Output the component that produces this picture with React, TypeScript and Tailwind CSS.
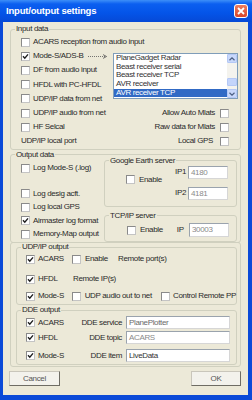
import React, {FC} from "react";
import clsx from "clsx";

const Box: FC<{on?: boolean}> = ({on}) => (
  <span className="inline-flex size-[9px] shrink-0 items-center justify-center border border-[#8a8a8a] border-b-[#c4c4c4] border-r-[#c4c4c4] bg-white">
    {on && (
      <svg width="7" height="7" viewBox="0 0 7 7">
        <path d="M1 3.3 L2.8 5.2 L6 1.4" fill="none" stroke="#1e1e1e" strokeWidth="1.4" />
      </svg>
    )}
  </span>
);

const Chk: FC<{on?: boolean; label: string; className?: string}> = ({on, label, className}) => (
  <div className={clsx("flex items-center gap-[3px]", className)}>
    <Box on={on} />
    <span className="whitespace-nowrap">{label}</span>
  </div>
);

const Field: FC<{value: string; className?: string; muted?: string}> = ({value, className, muted}) => (
  <div className={clsx("h-[13px] border border-[#9aa3ad] border-b-[#d6d6d6] border-r-[#d6d6d6] bg-white pl-[2px] leading-[11px] whitespace-nowrap overflow-hidden", muted ?? "text-[#333]", className)}>
    {value}
  </div>
);

const Group: FC<{title?: string; className?: string; children: React.ReactNode}> = ({title, className, children}) => (
  <fieldset className={clsx("border border-[#d0d0bf] rounded-[3px] min-w-0", className)}>
    {title && <legend className="ml-[4px] px-[1px] leading-[10px] whitespace-nowrap">{title}</legend>}
    {children}
  </fieldset>
);

const ScrollBtn: FC<{down?: boolean}> = ({down}) => (
  <div className="h-[9px] rounded-[1px] border border-[#b4c8f6] bg-[#c8d8fb] flex items-center justify-center">
    <svg width="6" height="4" viewBox="0 0 6 4">
      <path d={down ? "M0.5 0.8 L3 3.2 L5.5 0.8" : "M0.5 3.2 L3 0.8 L5.5 3.2"} fill="none" stroke="#4d6185" strokeWidth="1.2" />
    </svg>
  </div>
);

const Listbox = () => {
  const items = [
    "PlaneGadget Radar",
    "Beast receiver serial",
    "Beast receiver TCP",
    "AVR receiver",
    "AVR receiver TCP",
    "Aurora ADS-B Serial",
  ];
  return (
    <div className="flex w-[125px] h-[46px] border border-[#7f9db9] bg-white mt-[4px] mr-[-9px] ml-auto">
      <div className="flex-1 overflow-hidden">
        {items.map((it, i) => (
          <div
            key={it}
            className={clsx(
              "h-[8.6px] leading-[8.6px] pl-[2px] whitespace-nowrap",
              i === 4 ? "bg-[#316ac5] text-white" : "text-[#333]"
            )}
          >
            {it}
          </div>
        ))}
      </div>
      <div className="w-[10px] flex flex-col bg-[#f4f3ee]">
        <ScrollBtn />
        <div className="flex-1 flex flex-col justify-end pb-[3px]">
          <div className="h-[8px] rounded-[1px] border border-[#b4c8f6] bg-[#c4d5fb]" />
        </div>
        <ScrollBtn down />
      </div>
    </div>
  );
};

const Arrow = () => (
  <svg width="20" height="5" viewBox="0 0 20 5" className="ml-[5px]">
    <line x1="0" y1="2.5" x2="17" y2="2.5" stroke="#555" strokeWidth="0.8" strokeDasharray="1 1" />
    <path d="M15 0.6 L18.6 2.5 L15 4.4" fill="none" stroke="#555" strokeWidth="0.8" />
  </svg>
);

const App = () => {
  const row = "h-[14.2px] flex items-center";
  return (
    <div className="w-[252px] h-[400px] bg-[#0b4ad8] flex flex-col font-['Liberation_Sans',Arial,sans-serif] text-[8px] tracking-[-0.35px] text-[#2a2a2a]">
      <div className="h-[22px] shrink-0 flex items-center pl-[6px] pr-[4px] bg-[linear-gradient(to_bottom,#3d8ff8_0%,#0b5ff0_18%,#0454e8_60%,#0649d6_100%)]">
        <span className="flex-1 text-white font-bold text-[9.5px] tracking-[-0.2px]">Input/output settings</span>
        <div className="size-[14px] rounded-[3px] border border-white bg-[linear-gradient(to_bottom,#ee7d5e,#d9442a)] flex items-center justify-center">
          <svg width="8" height="8" viewBox="0 0 8 8">
            <path d="M1 1 L7 7 M7 1 L1 7" stroke="white" strokeWidth="1.8" />
          </svg>
        </div>
      </div>

      <div className="flex-1 ml-[3px] mr-[4px] mb-[5px] bg-[#ece9d8] flex flex-col">
        <Group title="Input data" className="mx-[7px] mt-[2px]">
          <div className="pl-[10px] pr-[11px] pt-[1px]">
            <div className={row}><Chk label="ACARS reception from audio input" /></div>
            <div className="flex">
              <div className="flex flex-col">
                <div className={row}><Chk on label="Mode-S/ADS-B" /><Arrow /></div>
                <div className={row}><Chk label="DF from audio input" /></div>
                <div className={row}><Chk label="HFDL with PC-HFDL" /></div>
                <div className={row}><Chk label="UDP/IP data from net" /></div>
              </div>
              <Listbox />
            </div>
            <div className={clsx(row, "justify-between")}>
              <Chk label="UDP/IP audio from net" />
              <div className="flex items-center gap-[5px]"><span>Allow Auto Mlats</span><Box /></div>
            </div>
            <div className={clsx(row, "justify-between")}>
              <Chk label="HF Selcal" />
              <div className="flex items-center gap-[5px]"><span>Raw data for Mlats</span><Box /></div>
            </div>
            <div className={clsx(row, "justify-between")}>
              <span>UDP/IP local port</span>
              <div className="flex items-center gap-[7px]"><span>Local GPS</span><Box /></div>
            </div>
          </div>
        </Group>

        <Group title="Output data" className="mx-[7px]">
          <div className="flex">
            <div className="w-[93px] shrink-0 pl-[10px] pt-[1.5px] flex flex-col">
              <div className="h-[14px] flex items-center"><Chk label="Log Mode-S (.log)" /></div>
              <div className="h-[13.5px] mt-[12px] flex items-center"><Chk label="Log desig acft." /></div>
              <div className="h-[13.5px] flex items-center"><Chk label="Log local GPS" /></div>
              <div className="h-[13.5px] flex items-center"><Chk on label="Airmaster log format" /></div>
              <div className="h-[13.5px] flex items-center"><Chk label="Memory-Map output" /></div>
            </div>
            <div className="flex-1 pr-[3px] flex flex-col">
              <Group title="Google Earth server" className="mt-[-4px]">
                <div className="flex pr-[8px] pb-[6px]">
                  <div className="pl-[21px] flex items-center pb-[6px]">
                    <Chk label="Enable" className="gap-[4px]" />
                  </div>
                  <div className="ml-auto flex flex-col gap-[8px]">
                    <div className="flex items-center gap-[2px]">
                      <span>IP1</span>
                      <Field value="4180" className="w-[40px]" muted="text-[#8a8a8a]" />
                    </div>
                    <div className="flex items-center gap-[2px]">
                      <span>IP2</span>
                      <Field value="4181" className="w-[40px]" muted="text-[#8a8a8a]" />
                    </div>
                  </div>
                </div>
              </Group>
              <Group title="TCP/IP server" className="mt-[4px]">
                <div className="flex items-center pl-[22px] pr-[7px] pt-[2.5px] pb-[4px]">
                  <Chk label="Enable" className="gap-[4px]" />
                  <span className="ml-[14px]">IP</span>
                  <Field value="30003" className="w-[40px] h-[14px] ml-auto" muted="text-[#8a8a8a]" />
                </div>
              </Group>
            </div>
          </div>
        </Group>

        <div className="mx-[7px] mt-[-1px] border border-[#d0d0bf] rounded-[3px] pl-[5px] pr-[3px] pb-[1px]">
          <Group title="UDP/IP output" className="mt-[-1px]">
            <div className="pl-[9px] pb-[1px]">
              <div className="h-[14px] flex items-center">
                <Chk on label="ACARS" className="w-[46px]" />
                <Chk label="Enable" className="w-[46px] gap-[4px]" />
                <span>Remote port(s)</span>
              </div>
              <div className="h-[14px] mt-[6px] flex items-center">
                <Chk on label="HFDL" className="w-[46px]" />
                <span className="ml-[1px]">Remote IP(s)</span>
              </div>
              <div className="h-[14px] mt-[3px] flex items-center">
                <Chk on label="Mode-S" className="w-[46px]" />
                <Chk label="UDP audio out to net" className="w-[90px] gap-[4px]" />
                <Chk label="Control Remote PP" className="gap-[3px]" />
              </div>
            </div>
          </Group>
          <Group title="DDE output">
            <div className="pl-[9px] pb-[2px]">
              <div className="h-[13px] mt-[1px] flex items-center">
                <Chk on label="ACARS" className="w-[46px]" />
                <span className="w-[50px] text-right">DDE service</span>
                <Field value="PlanePlotter" className="w-[104px] ml-[4px]" muted="text-[#6a6a6a]" />
              </div>
              <div className="h-[13px] mt-[2px] flex items-center">
                <Chk on label="HFDL" className="w-[46px]" />
                <span className="w-[50px] text-right">DDE topic</span>
                <Field value="ACARS" className="w-[104px] ml-[4px]" muted="text-[#8a8a8a]" />
              </div>
              <div className="h-[13px] mt-[5px] flex items-center">
                <Chk on label="Mode-S" className="w-[46px]" />
                <span className="w-[50px] text-right">DDE item</span>
                <Field value="LiveData" className="w-[104px] ml-[4px]" />
              </div>
            </div>
          </Group>
        </div>

        <div className="mt-[4px] flex justify-between pl-[6px] pr-[7px]">
          <div className="w-[51px] h-[15px] flex items-center justify-center bg-[#f3f2ec] border border-[#c9c6bb] border-r-[#6e6c64] border-b-[#6e6c64] text-[#555]">
            Cancel
          </div>
          <div className="w-[50px] h-[15px] flex items-center justify-center bg-[#f3f2ec] border border-[#c9c6bb] border-r-[#6e6c64] border-b-[#6e6c64] text-[#555]">
            OK
          </div>
        </div>
      </div>
    </div>
  );
};

export default App;
